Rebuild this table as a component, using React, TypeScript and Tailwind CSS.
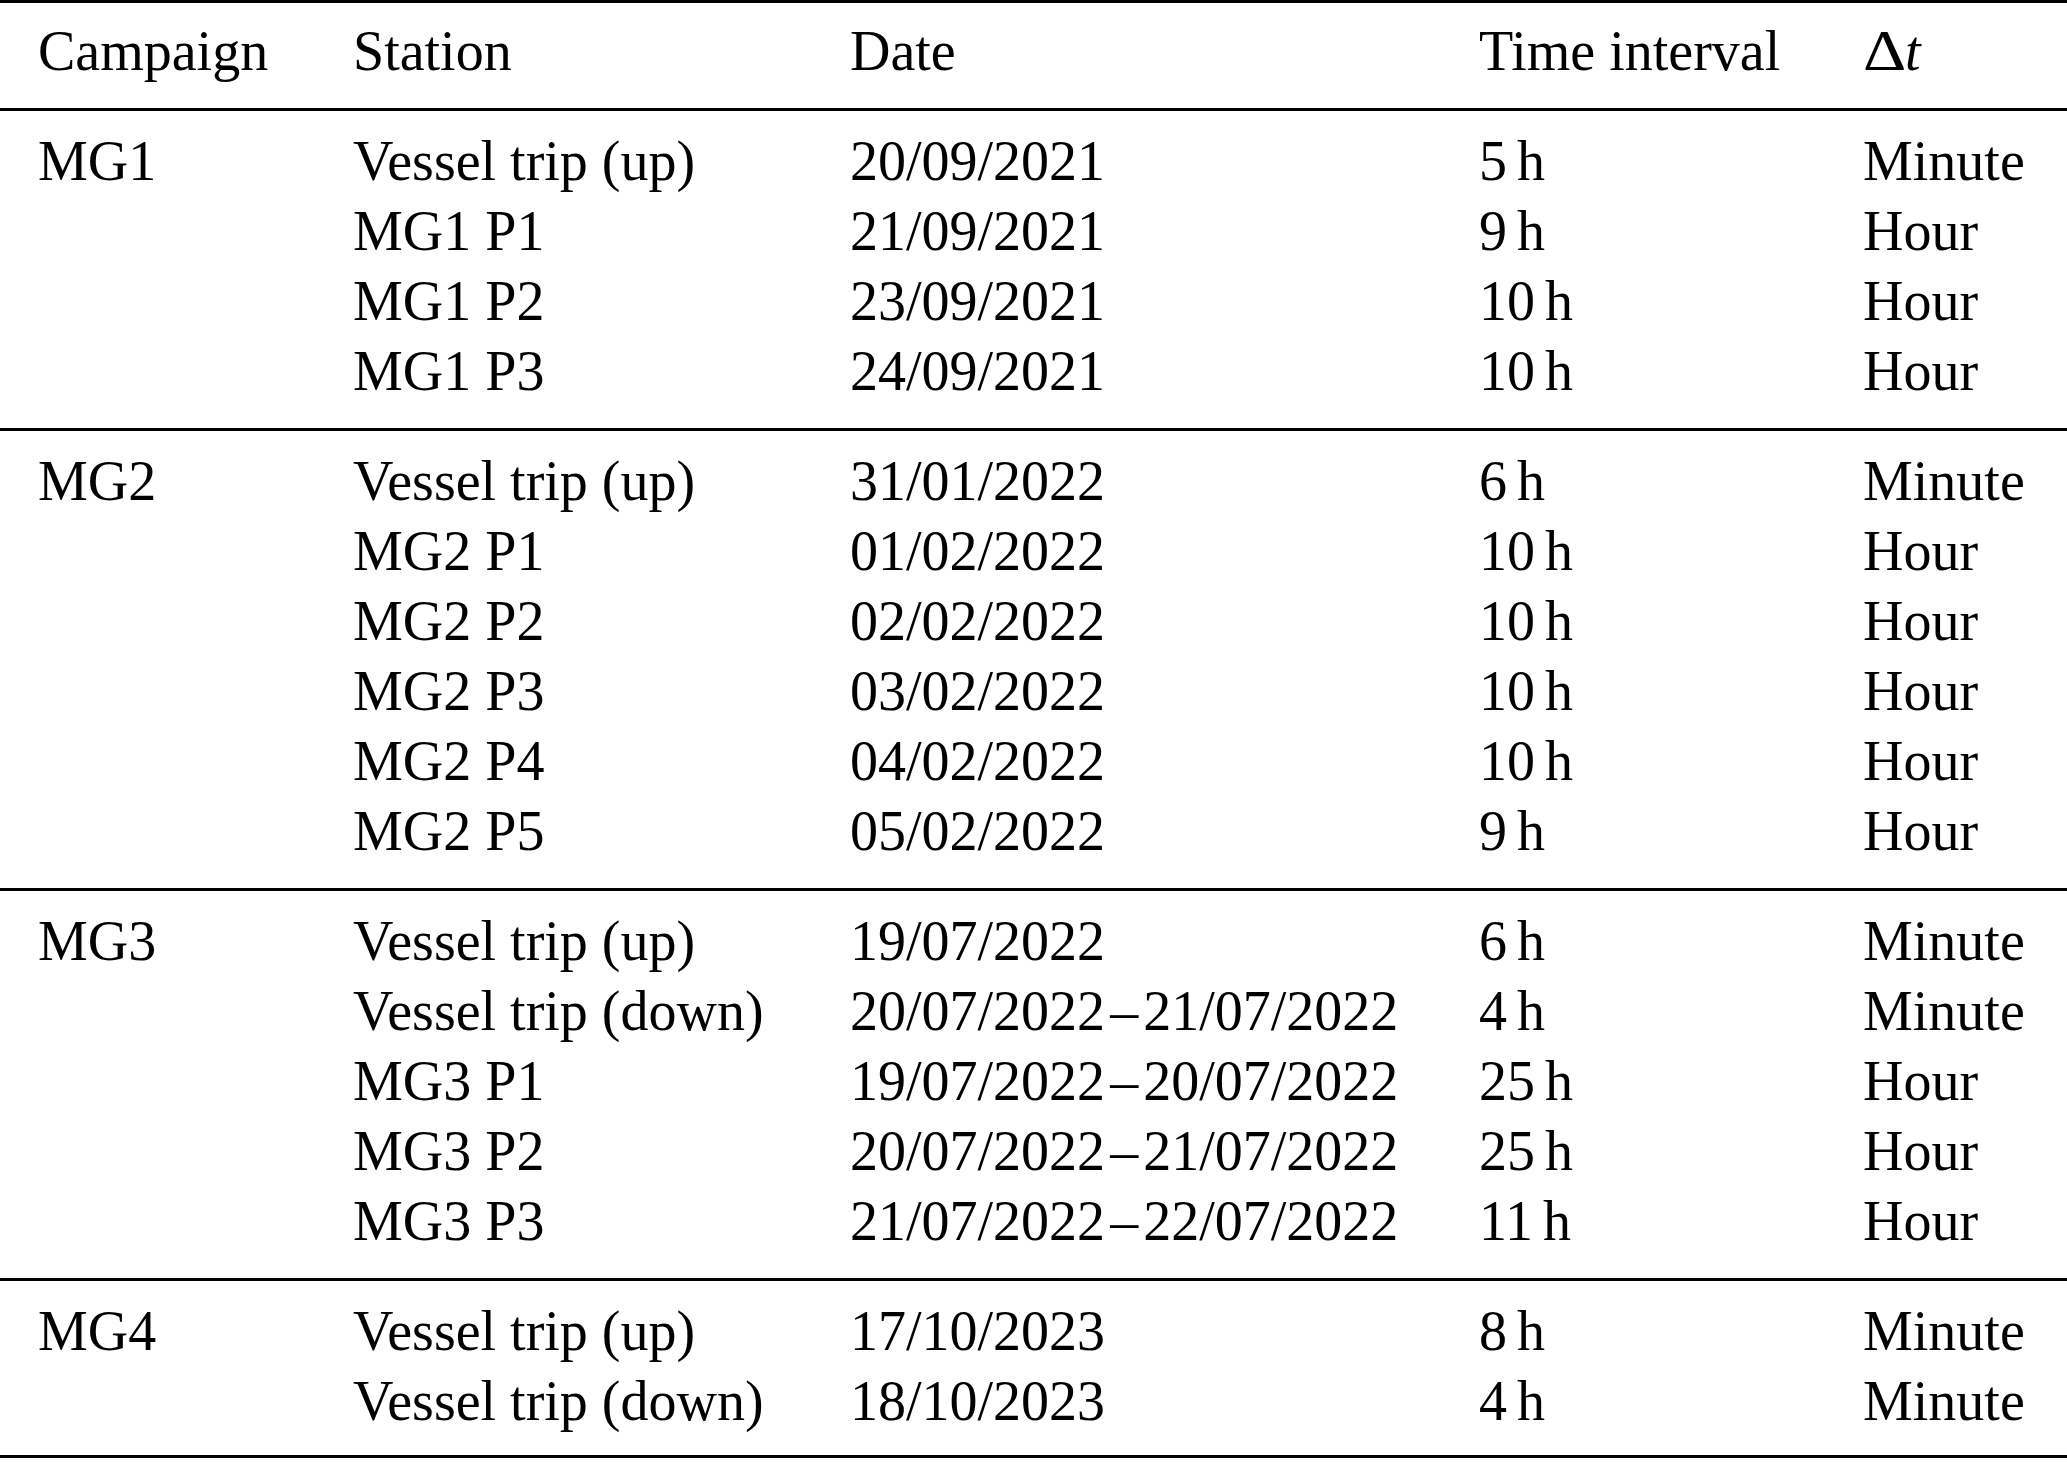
const COLS = 'grid grid-cols-[315px_497px_629px_384px_1fr] pl-[38px]';

type Row = { station: string; date: string; hours: number; dt: string };

const GROUPS: { campaign: string; rows: Row[] }[] = [
  {
    campaign: 'MG1',
    rows: [
      { station: 'Vessel trip (up)', date: '20/09/2021', hours: 5, dt: 'Minute' },
      { station: 'MG1 P1', date: '21/09/2021', hours: 9, dt: 'Hour' },
      { station: 'MG1 P2', date: '23/09/2021', hours: 10, dt: 'Hour' },
      { station: 'MG1 P3', date: '24/09/2021', hours: 10, dt: 'Hour' },
    ],
  },
  {
    campaign: 'MG2',
    rows: [
      { station: 'Vessel trip (up)', date: '31/01/2022', hours: 6, dt: 'Minute' },
      { station: 'MG2 P1', date: '01/02/2022', hours: 10, dt: 'Hour' },
      { station: 'MG2 P2', date: '02/02/2022', hours: 10, dt: 'Hour' },
      { station: 'MG2 P3', date: '03/02/2022', hours: 10, dt: 'Hour' },
      { station: 'MG2 P4', date: '04/02/2022', hours: 10, dt: 'Hour' },
      { station: 'MG2 P5', date: '05/02/2022', hours: 9, dt: 'Hour' },
    ],
  },
  {
    campaign: 'MG3',
    rows: [
      { station: 'Vessel trip (up)', date: '19/07/2022', hours: 6, dt: 'Minute' },
      { station: 'Vessel trip (down)', date: '20/07/2022–21/07/2022', hours: 4, dt: 'Minute' },
      { station: 'MG3 P1', date: '19/07/2022–20/07/2022', hours: 25, dt: 'Hour' },
      { station: 'MG3 P2', date: '20/07/2022–21/07/2022', hours: 25, dt: 'Hour' },
      { station: 'MG3 P3', date: '21/07/2022–22/07/2022', hours: 11, dt: 'Hour' },
    ],
  },
  {
    campaign: 'MG4',
    rows: [
      { station: 'Vessel trip (up)', date: '17/10/2023', hours: 8, dt: 'Minute' },
      { station: 'Vessel trip (down)', date: '18/10/2023', hours: 4, dt: 'Minute' },
    ],
  },
];

function DateCell({ date }: { date: string }) {
  const [from, to] = date.split('–');
  if (!to) return <span>{from}</span>;
  return (
    <span>
      {from}
      <span className="mx-[5px]">–</span>
      {to}
    </span>
  );
}

export default function App() {
  return (
    <div className="min-h-screen bg-white text-black font-['Liberation_Serif','Times_New_Roman',serif] text-[56px] leading-[70px]">
      <div className="border-t-[3px] border-black">
        {/* Header */}
        <div className={`${COLS} pt-[13px] pb-[22px] border-b-[3px] border-black`}>
          <div>Campaign</div>
          <div>Station</div>
          <div>Date</div>
          <div>Time interval</div>
          <div>
            <span className="inline-block origin-left scale-x-[1.2] mr-[6px]">Δ</span>
            <span className="italic">t</span>
          </div>
        </div>

        {/* Groups */}
        {GROUPS.map((group, gi) => (
          <div
            key={group.campaign}
            className={`pt-[15px] border-b-[3px] border-black ${gi === GROUPS.length - 1 ? 'pb-[19px]' : 'pb-[22px]'}`}
          >
            {group.rows.map((row, ri) => (
              <div key={ri} className={COLS}>
                <div>{ri === 0 ? group.campaign : ''}</div>
                <div className="whitespace-nowrap">{row.station}</div>
                <div className="whitespace-nowrap">
                  <DateCell date={row.date} />
                </div>
                <div className="whitespace-nowrap">
                  {row.hours}
                  <span className="ml-[10px]">h</span>
                </div>
                <div>{row.dt}</div>
              </div>
            ))}
          </div>
        ))}
      </div>
    </div>
  );
}
